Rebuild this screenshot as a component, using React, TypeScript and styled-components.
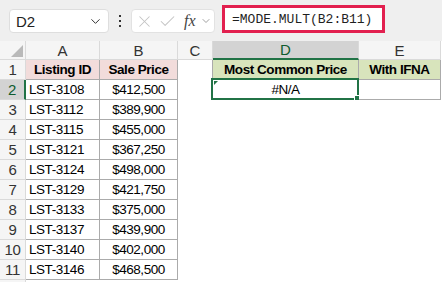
import styled, { createGlobalStyle } from 'styled-components';
import { ChevronDown, X, Check } from 'lucide-react';

const GlobalStyle = createGlobalStyle`
    html, body {
        margin: 0;
        padding: 0;
        background: #ffffff;
        overflow: hidden;
    }
    body {
        font-family: "Liberation Sans", Arial, sans-serif;
    }
`;

const colors = {
    toolbar: '#efefef',
    header: '#f5f5f5',
    headerLine: '#dadada',
    headerSelected: '#d3d3d3',
    green: '#217346',
    border: '#ababab',
    pink: '#f2dcdb',
    lime: '#d8e4bc',
    red: '#e2204f',
};

const Page = styled.div`
    width: 442px;
    height: 282px;
    overflow: hidden;
    background: #fff;
`;

const Toolbar = styled.div`
    display: flex;
    align-items: flex-end;
    height: 41px;
    box-sizing: border-box;
    padding: 0 0 8px 9px;
    background: ${colors.toolbar};
`;

const NameBox = styled.div`
    display: flex;
    align-items: center;
    justify-content: space-between;
    width: 100px;
    height: 24px;
    box-sizing: border-box;
    padding: 0 5px 0 6px;
    background: #fff;
    border: 1px solid #dedede;
    border-radius: 4px;
    font-size: 15px;
    color: #222;
`;

const Dots = styled.div`
    display: flex;
    flex-direction: column;
    align-items: center;
    justify-content: center;
    gap: 3px;
    width: 22px;
    height: 24px;

    span {
        width: 2px;
        height: 2px;
        background: #333;
    }
`;

const FormulaTools = styled.div`
    display: flex;
    align-items: center;
    width: 84px;
    height: 24px;
    box-sizing: border-box;
    padding: 0 2px 0 3px;
    gap: 4px;
    background: #fff;
    border: 1px solid #e2e2e2;
    border-radius: 4px;
    color: #c4c4c4;
`;

const Fx = styled.span`
    font-family: "Liberation Serif", "Times New Roman", serif;
    font-style: italic;
    font-size: 16px;
    color: #444;
    margin-left: 3px;
`;

const FormulaInput = styled.div`
    display: flex;
    align-items: center;
    margin-left: 7px;
    width: 163px;
    height: 28px;
    box-sizing: border-box;
    padding-left: 7px;
    background: #fff;
    border: 3px solid ${colors.red};
    font-family: "Liberation Mono", "Courier New", monospace;
    font-size: 13px;
    color: #1f1f1f;
`;

const Sheet = styled.div`
    display: grid;
    grid-template-columns: 26px 74px 78px 35px 146px 82px;
    grid-auto-rows: 20px;
    grid-template-rows: 19px;
`;

const Corner = styled.div`
    background: ${colors.header};
    border-right: 1px solid ${colors.headerLine};
    border-bottom: 1px solid ${colors.headerLine};
    box-sizing: border-box;
    display: flex;
    align-items: flex-end;
    justify-content: flex-end;
    padding: 0 2px 2px 0;
`;

const ColHeader = styled.div<{ $selected?: boolean }>`
    display: flex;
    align-items: center;
    justify-content: center;
    box-sizing: border-box;
    background: ${(p) => (p.$selected ? colors.headerSelected : colors.header)};
    border-right: 1px solid ${colors.headerLine};
    border-bottom: ${(p) => (p.$selected ? `2px solid ${colors.green}` : `1px solid ${colors.headerLine}`)};
    font-size: 15px;
    color: ${(p) => (p.$selected ? '#0e5c2f' : '#333')};
`;

const RowHeader = styled.div<{ $selected?: boolean }>`
    display: flex;
    align-items: center;
    justify-content: center;
    box-sizing: border-box;
    background: ${(p) => (p.$selected ? colors.headerSelected : colors.header)};
    border-right: ${(p) => (p.$selected ? `2px solid ${colors.green}` : `1px solid ${colors.headerLine}`)};
    border-bottom: 1px solid ${colors.headerLine};
    font-size: 15px;
    letter-spacing: -0.3px;
    color: ${(p) => (p.$selected ? '#0e5c2f' : '#333')};
`;

const Cell = styled.div<{
    $fill?: string;
    $align?: 'left' | 'center';
    $bold?: boolean;
    $boxed?: boolean;
    $edge?: boolean;
}>`
    position: relative;
    display: flex;
    align-items: center;
    justify-content: ${(p) => (p.$align === 'center' ? 'center' : 'flex-start')};
    box-sizing: border-box;
    padding: 0 3px;
    background: ${(p) => p.$fill || '#fff'};
    border-right: ${(p) => (p.$boxed || p.$edge ? `1px solid ${colors.border}` : '0')};
    border-bottom: ${(p) => (p.$boxed ? `1px solid ${colors.border}` : '0')};
    font-size: 13.5px;
    letter-spacing: -0.45px;
    font-weight: ${(p) => (p.$bold ? 700 : 400)};
    color: #000;
    white-space: nowrap;
`;

const Selection = styled.div`
    position: absolute;
    left: -2px;
    top: -2px;
    right: -1px;
    bottom: -1px;
    border: 2px solid ${colors.green};
    pointer-events: none;

    &::after {
        content: '';
        position: absolute;
        right: -4px;
        bottom: -4px;
        width: 5px;
        height: 5px;
        background: ${colors.green};
        border: 1px solid #fff;
    }
`;

const ErrorMark = styled.div`
    position: absolute;
    left: 1px;
    top: 1px;
    width: 0;
    height: 0;
    border-top: 4px solid ${colors.green};
    border-right: 4px solid transparent;
`;

const listings: [string, string][] = [
    ['LST-3108', '$412,500'],
    ['LST-3112', '$389,900'],
    ['LST-3115', '$455,000'],
    ['LST-3121', '$367,250'],
    ['LST-3124', '$498,000'],
    ['LST-3129', '$421,750'],
    ['LST-3133', '$375,000'],
    ['LST-3137', '$439,900'],
    ['LST-3140', '$402,000'],
    ['LST-3146', '$468,500'],
];

const columns = ['A', 'B', 'C', 'D', 'E'];

export default function App() {
    return (
        <Page>
            <GlobalStyle />
            <Toolbar>
                <NameBox>
                    <span>D2</span>
                    <ChevronDown size={15} strokeWidth={1.6} color="#333" />
                </NameBox>
                <Dots>
                    <span />
                    <span />
                    <span />
                </Dots>
                <FormulaTools>
                    <X size={19} strokeWidth={1.3} />
                    <Check size={19} strokeWidth={1.3} />
                    <Fx>fx</Fx>
                    <ChevronDown size={12} strokeWidth={1.6} color="#888" />
                </FormulaTools>
                <FormulaInput>=MODE.MULT(B2:B11)</FormulaInput>
            </Toolbar>
            <Sheet>
                <Corner>
                    <svg width="12" height="12" viewBox="0 0 12 12">
                        <polygon points="12,0 12,12 0,12" fill="#b9b9b9" />
                    </svg>
                </Corner>
                {columns.map((c) => (
                    <ColHeader key={c} $selected={c === 'D'}>
                        {c}
                    </ColHeader>
                ))}

                <RowHeader>1</RowHeader>
                <Cell $fill={colors.pink} $align="center" $bold $boxed>
                    Listing ID
                </Cell>
                <Cell $fill={colors.pink} $align="center" $bold $boxed>
                    Sale Price
                </Cell>
                <Cell $edge />
                <Cell $fill={colors.lime} $align="center" $bold $boxed>
                    Most Common Price
                </Cell>
                <Cell $fill={colors.lime} $align="center" $bold $boxed>
                    With IFNA
                </Cell>

                {listings.map(([id, price], i) => {
                    const row = i + 2;
                    return [
                        <RowHeader key={`h${row}`} $selected={row === 2}>
                            {row}
                        </RowHeader>,
                        <Cell key={`a${row}`} $boxed>
                            {id}
                        </Cell>,
                        <Cell key={`b${row}`} $align="center" $boxed>
                            {price}
                        </Cell>,
                        <Cell key={`c${row}`} $edge={row === 2} />,
                        row === 2 ? (
                            <Cell key={`d${row}`} $align="center" $boxed>
                                #N/A
                                <ErrorMark />
                                <Selection />
                            </Cell>
                        ) : (
                            <Cell key={`d${row}`} />
                        ),
                        <Cell key={`e${row}`} $boxed={row === 2} />,
                    ];
                })}

                <RowHeader />
            </Sheet>
        </Page>
    );
}
